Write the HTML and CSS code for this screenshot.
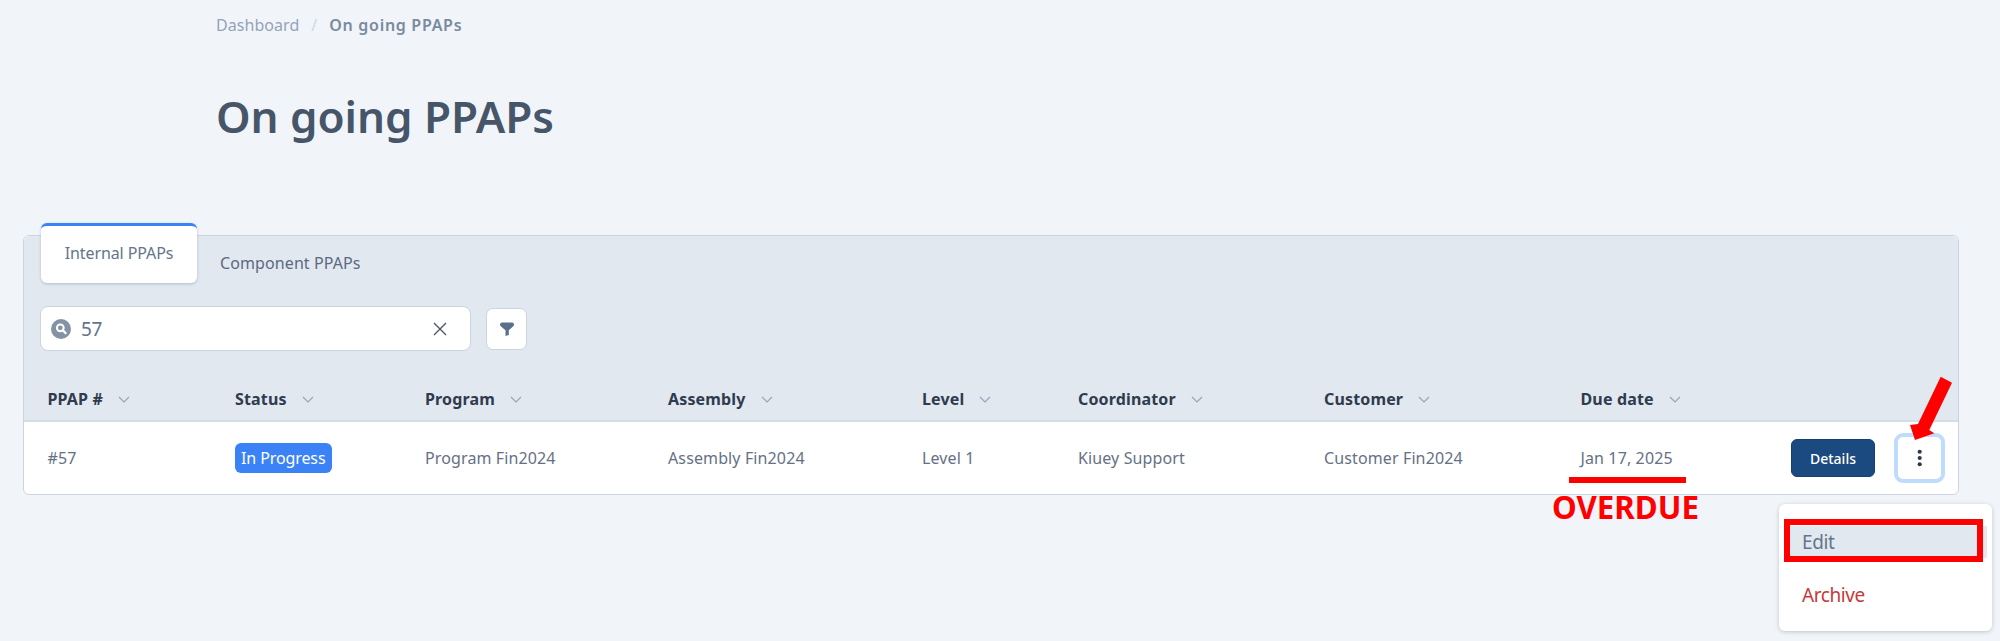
FILE: index.html
```html
<!DOCTYPE html>
<html lang="en">
<head>
<meta charset="utf-8">
<title>On going PPAPs</title>
<link rel="stylesheet" href="styles.css">
</head>
<body>
<div class="page">
  <header class="page-head">
    <nav class="crumbs"><span>Dashboard</span><span class="sep">/</span><strong>On going PPAPs</strong></nav>
    <h1>On going PPAPs</h1>
  </header>
  <section class="card">
    <div class="card-top">
      <div class="tabs">
        <div class="tab active">Internal PPAPs</div>
        <div class="tab">Component PPAPs</div>
      </div>
      <div class="filters">
        <div class="search">
          <svg class="search-icon" viewBox="0 0 20 20"><circle cx="10" cy="10" r="10" fill="#8492a6"/><circle cx="9.3" cy="8.8" r="3.4" fill="none" stroke="#fff" stroke-width="2"/><path d="M11.8 11.3l2.8 2.8" stroke="#fff" stroke-width="2.2" stroke-linecap="round"/></svg>
          <span class="search-val">57</span>
          <svg class="clear" viewBox="0 0 14 14"><path d="M1 1l12 12M13 1L1 13" stroke="#4a5568" stroke-width="1.4" fill="none"/></svg>
        </div>
        <button class="filter-btn"><svg viewBox="0 0 16 14"><path d="M1 2.500C1 1.200 2 .5 3 .5h10c1 0 2 .7 2 2 0 1-.6 1.700-1.300 2.300L9.800 8.200V13l-3.300 1V8.200L2.300 4.800C1.600 4.200 1 3.500 1 2.500z" fill="#5a6f8c"/></svg></button>
      </div>
      <div class="row head">
        <div>PPAP #<svg class="chev" viewBox="0 0 12 7"><path d="M1 1l5 5 5-5"/></svg></div>
        <div>Status<svg class="chev" viewBox="0 0 12 7"><path d="M1 1l5 5 5-5"/></svg></div>
        <div>Program<svg class="chev" viewBox="0 0 12 7"><path d="M1 1l5 5 5-5"/></svg></div>
        <div>Assembly<svg class="chev" viewBox="0 0 12 7"><path d="M1 1l5 5 5-5"/></svg></div>
        <div>Level<svg class="chev" viewBox="0 0 12 7"><path d="M1 1l5 5 5-5"/></svg></div>
        <div>Coordinator<svg class="chev" viewBox="0 0 12 7"><path d="M1 1l5 5 5-5"/></svg></div>
        <div>Customer<svg class="chev" viewBox="0 0 12 7"><path d="M1 1l5 5 5-5"/></svg></div>
        <div>Due date<svg class="chev" viewBox="0 0 12 7"><path d="M1 1l5 5 5-5"/></svg></div>
        <div></div>
      </div>
    </div>
    <div class="row body">
      <div>#57</div>
      <div><span class="badge">In Progress</span></div>
      <div>Program Fin2024</div>
      <div>Assembly Fin2024</div>
      <div>Level 1</div>
      <div>Kiuey Support</div>
      <div>Customer Fin2024</div>
      <div>Jan 17, 2025</div>
      <div class="actions">
        <button class="details">Details</button>
        <button class="kebab"><svg viewBox="0 0 6 20"><circle cx="3" cy="3" r="2.300"/><circle cx="3" cy="10" r="2.300"/><circle cx="3" cy="17" r="2.300"/></svg></button>
      </div>
    </div>
  </section>
  <div class="menu">
    <div class="menu-item hover">Edit</div>
    <div class="menu-item danger">Archive</div>
  </div>
  <div class="mark-box"></div>
  <div class="mark-line"></div>
  <div class="mark-text">OVERDUE</div>
  <svg class="mark-arrow" viewBox="0 0 44 68"><path d="M30.700.7L42 6.700 19.300 54l5 3.300L5 64 0 49l8-1z" fill="#f00"/></svg>
</div>
</body>
</html>
```
FILE: styles.css
```css
* { box-sizing: border-box; }
html, body { margin: 0; height: 100%; }
body {
  background: #f1f5f9;
  font-family: "Noto Sans", "Open Sans", sans-serif;
  color: #667085;
  overflow: hidden;
}
.page { position: relative; height: 641px; padding: 0 41px 0 23px; }
.page-head { padding: 15px 0 0 193px; height: 235px; }
.crumbs { display: flex; align-items: center; font-size: 16px; line-height: 20px; color: #94a3b8; letter-spacing: .05px; }
.crumbs .sep { margin: 0 12px; color: #cbd5e0; }
.crumbs strong { font-weight: 600; color: #7a8a9f; letter-spacing: .7px; }
h1 { margin: 53px 0 0; font-size: 44px; line-height: 56px; font-weight: 600; color: #475569; letter-spacing: -.05px; }
.card { border: 1px solid #cbd5e0; border-radius: 6px; background: #fff; height: 260px; }
.card-top { display: flow-root; background: #e2e8f0; height: 186px; border-bottom: 2px solid #d5dde8; border-radius: 6px 6px 0 0; }
.tabs { display: flex; align-items: center; margin: -13px 0 0 17px; height: 60px; font-size: 16px; color: #5a6a80; }
.tab { padding: 19px 23px 0; height: 60px; display: flex; align-items: center; letter-spacing: .1px; }
.tab.active { width: 156px; justify-content: center; padding: 0 0 3px; background: #fff; border-top: 3px solid #3b82f6; border-radius: 6px; box-shadow: 0 1px 3px rgba(71,85,105,.3); color: #64748b; letter-spacing: -.1px; }
.filters { display: flex; align-items: center; gap: 15px; margin: 23px 0 0 16px; }
.search { width: 431px; height: 45px; background: #fff; border: 1px solid #cbd5e0; border-radius: 8px; display: flex; align-items: center; padding: 0 23px 0 10px; }
.search-icon { width: 20px; height: 20px; flex: none; }
.search-val { flex: 1; margin-left: 10px; font-size: 19px; color: #64748b; letter-spacing: -.3px; }
.clear { width: 14px; height: 14px; }
.filter-btn { width: 41px; height: 42px; padding: 0; background: #fff; border: 1px solid #cbd5e0; border-radius: 7px; display: flex; align-items: center; justify-content: center; }
.filter-btn svg { width: 16px; height: 14px; }
.row { display: grid; grid-template-columns: 187.500px 190px 243px 254px 156px 246px 256.500px 1fr 173px; padding-left: 23.500px; align-items: center; font-size: 16px; letter-spacing: .12px; }
.head { height: 69px; padding-top: 27px; font-weight: 700; color: #2f3b4e; letter-spacing: .15px; }
.chev { width: 12px; height: 7px; margin-left: 15px; fill: none; stroke: #94a3b8; stroke-width: 1.100; vertical-align: 2px; }
.body { height: 72px; }
.badge { display: inline-block; background: #3b82f6; color: #fff; line-height: 30px; height: 30px; padding: 0 6px; border-radius: 6px; letter-spacing: -.1px; }
.actions { display: flex; align-items: center; justify-content: flex-end; gap: 19px; padding-right: 13px; }
.details { width: 84px; height: 38px; background: #1a4a80; border: 1px solid #173f6f; border-radius: 6px; color: #fff; font: 500 14px "Noto Sans", sans-serif; padding: 0; }
.kebab { width: 51px; height: 50px; padding: 0; background: #fff; border: 4px solid #bfdbfe; border-radius: 9px; display: flex; align-items: center; justify-content: center; }
.kebab svg { width: 5.400px; height: 18px; fill: #2d3748; }
.menu { position: absolute; left: 1779px; top: 504px; width: 213px; height: 127px; padding-top: 22px; background: #fff; border-radius: 6px; box-shadow: 0 1px 4px rgba(71,85,105,.3); }
.menu-item { height: 32px; padding-left: 23px; font-size: 19px; line-height: 32px; letter-spacing: -.4px; }
.menu-item.hover { margin: 0 5px 0 10px; padding-left: 13px; background: #e2e8f0; height: 32px; color: #64748b; }
.menu-item.danger { margin-top: 21px; color: #c53a3a; }
.mark-box { position: absolute; left: 1784px; top: 519px; width: 199px; height: 43px; border: 6px solid #f00; }
.mark-line { position: absolute; left: 1569px; top: 477px; width: 117px; height: 6px; background: #f00; }
.mark-text { position: absolute; left: 1552px; top: 487px; font: 700 31.300px/40px "Noto Sans", sans-serif; color: #f00; }
.mark-arrow { position: absolute; left: 1910px; top: 376px; width: 44px; height: 68px; }
```
